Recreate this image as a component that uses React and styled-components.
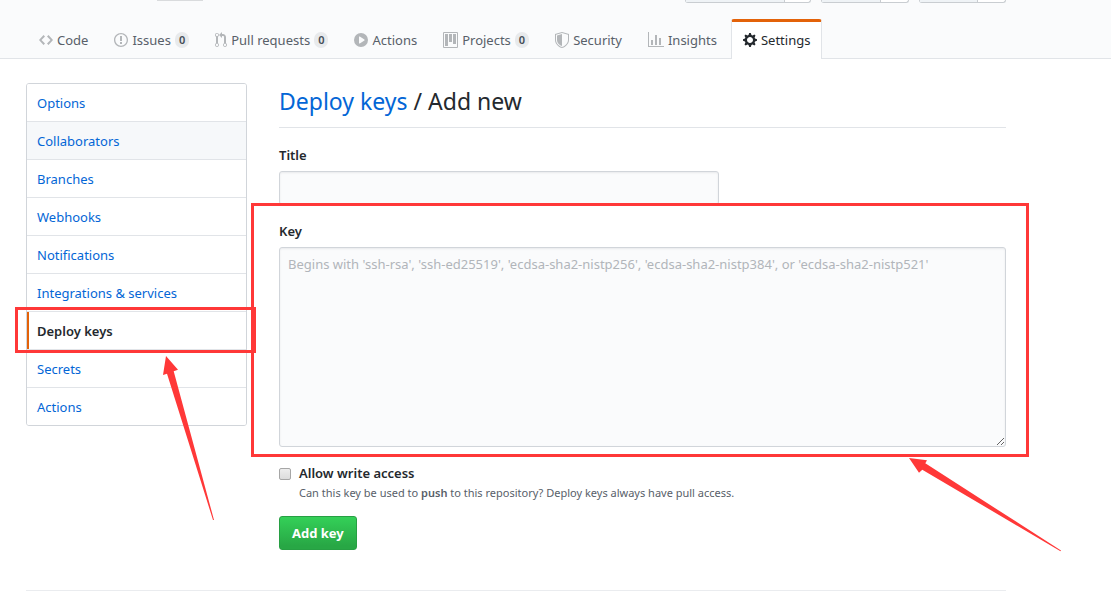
import React from 'react';
import styled, { createGlobalStyle, css } from 'styled-components';

const GlobalStyle = createGlobalStyle`
  * {
    box-sizing: border-box;
  }
  body {
    margin: 0;
    background: #fff;
    color: #24292e;
    font-family: 'Noto Sans', 'Open Sans', sans-serif;
    font-size: 13px;
    line-height: 21px;
  }
  a {
    color: #0366d6;
    text-decoration: none;
  }
`;

const Page = styled.div`
  position: relative;
`;

const Header = styled.header`
  padding-left: 27px;
  background: #fafbfc;
  border-bottom: 1px solid #e1e4e8;
`;

const RepoHead = styled.div`
  display: flex;
  gap: 10px;
  max-width: 979px;
  height: 19px;
`;

const RepoName = styled.span`
  width: 46px;
  height: 1px;
  margin: 0 auto 0 130px;
  background: #d9dbdd;
`;

const CountGroup = styled.span`
  display: grid;
  grid-template-columns: ${({ $main }) => $main}px ${({ $count }) => $count}px;
  height: 3px;
  border: 1px solid #c9cdd1;
  border-top: 0;
  border-radius: 0 0 3px 3px;
  background: #fff;

  &::before {
    content: '';
    background: #eff3f6;
    border-right: 1px solid #c9cdd1;
  }
`;

const Nav = styled.nav`
  display: flex;
  gap: 2px;
  margin-bottom: -1px;
`;

const NavItem = styled.a`
  display: flex;
  align-items: center;
  gap: 4px;
  height: 40px;
  padding: 0 11px 1px;
  border: 1px solid transparent;
  border-top: 3px solid transparent;
  border-bottom: 0;
  color: #586069;
  white-space: nowrap;

  svg {
    flex: none;
    fill: #b3b6b9;
  }

  ${({ $selected }) =>
    $selected &&
    css`
      color: #24292e;
      background: #fff;
      border-color: #e36209 #e1e4e8 transparent;
      border-radius: 3px 3px 0 0;

      svg {
        fill: #24292e;
      }
    `}
`;

const Counter = styled.span`
  padding: 0 4px;
  border-radius: 20px;
  background: #e8eaec;
  color: #444d56;
  font-size: 11px;
  font-weight: 600;
  line-height: 16px;
`;

const Container = styled.div`
  display: flex;
  align-items: flex-start;
  gap: 32px;
  max-width: 980px;
  margin: 24px 26px 0;
`;

const Menu = styled.nav`
  flex: none;
  width: 221px;
  border: 1px solid #d1d5da;
  border-radius: 3px;
  overflow: hidden;
`;

const MenuItem = styled.a`
  display: block;
  padding: 9px 10px 7px;
  border-bottom: 1px solid #e1e4e8;
  background: ${({ $hovered }) => ($hovered ? '#f6f8fa' : '#fff')};

  &:last-child {
    border-bottom: 0;
  }

  ${({ $selected }) =>
    $selected &&
    css`
      color: #24292e;
      font-weight: 600;
      box-shadow: inset 2px 0 0 #e36209;
    `}
`;

const Main = styled.main`
  flex: 1;
  min-width: 0;
`;

const Heading = styled.h2`
  margin: 0;
  padding-bottom: 8px;
  border-bottom: 1px solid #e1e4e8;
  font-size: 23px;
  font-weight: 400;
  line-height: 36px;
`;

const Field = styled.div`
  display: flex;
  flex-direction: column;
  gap: 5px;
  margin-top: ${({ $top }) => $top}px;
`;

const Label = styled.label`
  font-weight: 600;
`;

const fieldBox = css`
  display: block;
  margin: 0;
  padding: 6px 8px;
  border: 1px solid #d1d5da;
  border-radius: 3px;
  background: #fafbfc;
  box-shadow: inset 0 1px 2px rgba(27, 31, 35, 0.075);
  color: #24292e;
  font: inherit;
  line-height: 20px;
  outline: none;
`;

const TextInput = styled.input`
  ${fieldBox}
  width: 440px;
  max-width: 100%;
  height: 34px;
`;

const TextArea = styled.textarea`
  ${fieldBox}
  width: 100%;
  height: 200px;
  resize: vertical;

  &::placeholder {
    color: #b1b5ba;
    opacity: 1;
  }
`;

const CheckRow = styled.div`
  display: grid;
  grid-template-columns: 12px 1fr;
  align-items: center;
  column-gap: 8px;
  margin-top: 16px;
`;

const Checkbox = styled.input`
  appearance: none;
  width: 12px;
  height: 12px;
  margin: 0;
  border: 1px solid #a6a6a6;
  border-radius: 2px;
  background: linear-gradient(#ededed, #dcdcdc);
`;

const Note = styled.p`
  grid-column: 2;
  margin: 0;
  color: #586069;
  font-size: 11px;
  line-height: 18px;

  strong {
    font-weight: 600;
  }
`;

const SubmitButton = styled.button`
  display: block;
  margin: 14px 0 40px;
  padding: 6px 12px;
  border: 1px solid #279f43;
  border-radius: 3px;
  background: linear-gradient(#34d058, #28a745 90%);
  color: #fff;
  font: inherit;
  font-weight: 700;
  line-height: 20px;
`;

const Footer = styled.footer`
  max-width: 980px;
  margin: 0 26px;
  border-top: 1px solid #eaecef;
`;

const Highlight = styled.div`
  position: absolute;
  left: ${({ $x }) => $x}px;
  top: ${({ $y }) => $y}px;
  width: ${({ $w }) => $w}px;
  height: ${({ $h }) => $h}px;
  border: 3px solid #ff3838;
  pointer-events: none;
`;

const Arrow = styled.svg`
  position: absolute;
  left: ${({ $x }) => $x}px;
  top: ${({ $y }) => $y}px;
  fill: #ff3838;
  pointer-events: none;
`;

const navItems = [
  {
    label: 'Code',
    width: 14,
    path: 'M9.5 3L8 4.5 11.5 8 8 11.5 9.5 13 14 8 9.5 3zm-5 0L0 8l4.5 5L6 11.5 2.5 8 6 4.5 4.5 3z',
  },
  {
    label: 'Issues',
    count: 0,
    width: 14,
    path: 'M7 2.3c3.14 0 5.7 2.56 5.7 5.7s-2.56 5.7-5.7 5.7A5.71 5.71 0 0 1 1.3 8c0-3.14 2.56-5.7 5.7-5.7zM7 1C3.14 1 0 4.14 0 8s3.14 7 7 7 7-3.14 7-7-3.14-7-7-7zm1 3H6v5h2V4zm0 6H6v2h2v-2z',
  },
  {
    label: 'Pull requests',
    count: 0,
    width: 12,
    path: 'M11 11.28V5c-.03-.78-.34-1.47-.94-2.06C9.46 2.35 8.78 2.03 8 2H7V0L4 3l3 3V4h1c.27.02.48.11.69.31.21.2.3.42.31.69v6.28A1.993 1.993 0 0 0 10 15a1.993 1.993 0 0 0 1-3.72zm-1 2.92c-.66 0-1.2-.55-1.2-1.2 0-.65.55-1.2 1.2-1.2.65 0 1.2.55 1.2 1.2 0 .65-.55 1.2-1.2 1.2zM4 3c0-1.11-.89-2-2-2a1.993 1.993 0 0 0-1 3.72v6.56A1.993 1.993 0 0 0 2 15a1.993 1.993 0 0 0 1-3.72V4.72c.59-.34 1-.98 1-1.72zm-.8 10c0 .66-.55 1.2-1.2 1.2-.65 0-1.2-.55-1.2-1.2 0-.65.55-1.2 1.2-1.2.65 0 1.2.55 1.2 1.2zM2 4.2C1.34 4.2.8 3.65.8 3c0-.65.55-1.2 1.2-1.2.65 0 1.2.55 1.2 1.2 0 .65-.55 1.2-1.2 1.2z',
  },
  {
    label: 'Actions',
    width: 14,
    path: 'M14 8A7 7 0 1 1 0 8a7 7 0 0 1 14 0zm-8.223 3.482l4.599-3.066a.5.5 0 0 0 0-.832L5.777 4.518A.5.5 0 0 0 5 4.934v6.132a.5.5 0 0 0 .777.416z',
  },
  {
    label: 'Projects',
    count: 0,
    width: 15,
    path: 'M10 12h3V2h-3v10zm-4-2h3V2H6v8zm-4 4h3V2H2v12zm-1 1h13V1H1v14zM14 0H1a1 1 0 0 0-1 1v14a1 1 0 0 0 1 1h13a1 1 0 0 0 1-1V1a1 1 0 0 0-1-1z',
  },
  {
    label: 'Security',
    width: 14,
    path: 'M0 2l7-2 7 2v6.02C14 12.69 8.69 16 7 16c-1.69 0-7-3.31-7-7.98V2zm1 .75L7 1l6 1.75v5.268C13 12.104 8.449 15 7 15c-1.449 0-6-2.896-6-6.982V2.75zm1 .75L7 2v12c-1.207 0-5-2.482-5-5.985V3.5z',
  },
  {
    label: 'Insights',
    width: 16,
    path: 'M16 14v1H0V0h1v14h15zM5 13H3V8h2v5zm4 0H7V3h2v10zm4 0h-2V6h2v7z',
  },
  {
    label: 'Settings',
    selected: true,
    width: 14,
    path: 'M14 8.77v-1.6l-1.94-.64-.45-1.09.88-1.84-1.13-1.13-1.81.91-1.09-.45-.69-1.92h-1.6l-.63 1.94-1.11.45-1.84-.88-1.13 1.13.91 1.81-.45 1.09L0 7.23v1.59l1.94.64.45 1.09-.88 1.84 1.13 1.13 1.81-.91 1.09.45.69 1.92h1.59l.63-1.94 1.11-.45 1.84.88 1.13-1.13-.92-1.81.47-1.09L14 8.75v.02zM7 11c-1.66 0-3-1.34-3-3s1.34-3 3-3 3 1.34 3 3-1.34 3-3 3z',
  },
];

const menuItems = [
  'Options',
  'Collaborators',
  'Branches',
  'Webhooks',
  'Notifications',
  'Integrations & services',
  'Deploy keys',
  'Secrets',
  'Actions',
];

function App() {
  return (
    <Page>
      <GlobalStyle />
      <Header>
        <RepoHead>
          <RepoName />
          <CountGroup $main={99} $count={25} />
          <CountGroup $main={59} $count={27} />
          <CountGroup $main={58} $count={27} />
        </RepoHead>
        <Nav>
          {navItems.map(item => {
            return (
              <NavItem href="#" key={item.label} $selected={item.selected}>
                <svg
                  width={item.width}
                  height="16"
                  viewBox={`0 0 ${item.width} 16`}
                  fillRule="evenodd"
                  aria-hidden="true"
                >
                  <path d={item.path} />
                </svg>
                <span>{item.label}</span>
                {item.count !== undefined && <Counter>{item.count}</Counter>}
              </NavItem>
            );
          })}
        </Nav>
      </Header>

      <Container>
        <Menu>
          {menuItems.map(label => {
            return (
              <MenuItem
                href="#"
                key={label}
                $hovered={label === 'Collaborators'}
                $selected={label === 'Deploy keys'}
              >
                {label}
              </MenuItem>
            );
          })}
        </Menu>

        <Main>
          <Heading>
            <a href="#">Deploy keys</a> / Add new
          </Heading>
          <form>
            <Field $top={17}>
              <Label htmlFor="title">Title</Label>
              <TextInput id="title" type="text" />
            </Field>
            <Field $top={16}>
              <Label htmlFor="key">Key</Label>
              <TextArea
                id="key"
                placeholder="Begins with 'ssh-rsa', 'ssh-ed25519', 'ecdsa-sha2-nistp256', 'ecdsa-sha2-nistp384', or 'ecdsa-sha2-nistp521'"
              />
            </Field>
            <CheckRow>
              <Checkbox id="write" type="checkbox" />
              <Label htmlFor="write">Allow write access</Label>
              <Note>
                Can this key be used to <strong>push</strong> to this
                repository? Deploy keys always have pull access.
              </Note>
            </CheckRow>
            <SubmitButton type="button">Add key</SubmitButton>
          </form>
        </Main>
      </Container>
      <Footer />

      <Highlight $x={251} $y={203} $w={778} $h={254} />
      <Highlight $x={15} $y={307} $w={241} $h={46} />
      <Arrow $x={162} $y={356} width="53" height="165" viewBox="0 0 53 165">
        <polygon points="4,0 1,19 5,17.7 51,164 52,164 11.7,15.3 16,13.7" />
      </Arrow>
      <Arrow $x={908} $y={457} width="154" height="95" viewBox="0 0 154 95">
        <polygon points="1,1 19,3.3 17.3,6.3 153,93.5 152.5,94.3 14.3,12.7 11,15.7" />
      </Arrow>
    </Page>
  );
}

export default App;
